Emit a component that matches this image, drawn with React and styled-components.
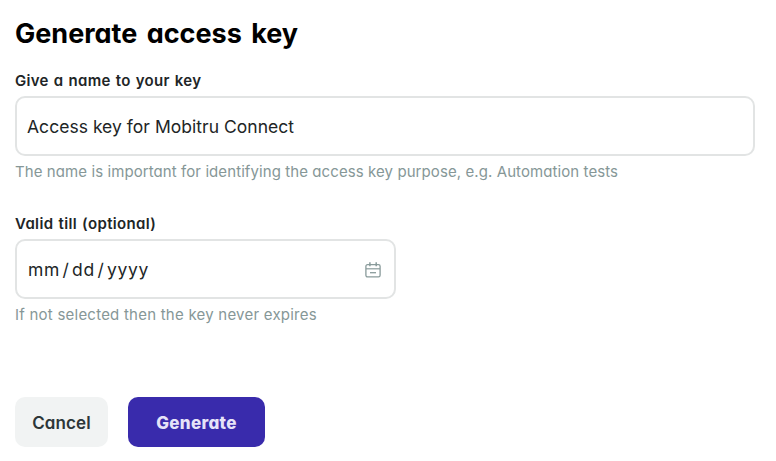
import React from "react"
import styled, { createGlobalStyle } from "styled-components"

const GlobalStyle = createGlobalStyle`
  * {
    box-sizing: border-box;
  }
  body {
    margin: 0;
    background-color: #fff;
    font-family: Inter, "Open Sans", sans-serif;
    font-feature-settings: "cv11";
  }
`

const Form = styled.form`
  display: flex;
  flex-direction: column;
  width: 776px;
  height: 461px;
  padding: 16px 21px 0 15px;
  h1 {
    margin: 0 0 20px;
    font-size: 27px;
    line-height: 36px;
    font-weight: 700;
    letter-spacing: 0;
    word-spacing: 3px;
    color: #000;
    white-space: nowrap;
  }
`

const Field = styled.div`
  display: flex;
  flex-direction: column;
  width: ${props => props.$width};
  height: 143px;
  white-space: nowrap;
`

const Label = styled.label`
  height: 24px;
  line-height: 18px;
  font-size: 15px;
  font-weight: 600;
  letter-spacing: ${props => props.$spacing};
  word-spacing: 1px;
  color: #212526;
`

const InputBox = styled.div`
  display: flex;
  align-items: center;
  justify-content: space-between;
  height: 60px;
  padding: 0 13px 0 ${props => props.$indent};
  border: 2px solid #e2e4e4;
  border-radius: 10px;
  font-size: 17.5px;
  letter-spacing: ${props => props.$spacing};
  color: #212526;
  svg {
    margin-top: 1px;
  }
`

const DateParts = styled.div`
  display: flex;
  gap: 2.5px;
`

const Hint = styled.span`
  padding-top: 6px;
  font-size: 15px;
  line-height: 20px;
  letter-spacing: ${props => props.$spacing};
  color: #869797;
`

const Buttons = styled.div`
  display: flex;
  gap: 20px;
  margin-top: 39px;
`

const Button = styled.button`
  width: ${props => (props.$primary ? "137px" : "93px")};
  height: 50px;
  padding: 2px 0 0;
  border: none;
  border-radius: 10px;
  font-family: inherit;
  font-feature-settings: inherit;
  font-size: 17px;
  font-weight: ${props => (props.$primary ? 800 : 600)};
  letter-spacing: ${props => (props.$primary ? "0.3px" : "0.1px")};
  color: ${props => (props.$primary ? "#e6e3f8" : "#2d3638")};
  background-color: ${props => (props.$primary ? "#392bac" : "#f1f3f3")};
`

const CalendarIcon = () => (
  <svg width="16" height="16" viewBox="0 0 16 16" fill="none" stroke="#899b9b">
    <rect x="0.9" y="2.7" width="14.2" height="12.2" rx="1.6" strokeWidth="1.3" />
    <path d="M1 6.8h14" strokeWidth="1.2" />
    <path d="M4.9 0.3v4M11.2 0.3v4" strokeWidth="1.5" />
    <path d="M5 10.7h6" strokeWidth="1.3" />
  </svg>
)

const App = () => (
  <>
    <GlobalStyle />
    <Form>
      <h1>Generate access key</h1>
      <Field $width="740px">
        <Label $spacing="0.3px">Give a name to your key</Label>
        <InputBox $indent="10px" $spacing="0.03px">
          Access key for Mobitru Connect
        </InputBox>
        <Hint $spacing="0.085px">
          The name is important for identifying the access key purpose, e.g. Automation tests
        </Hint>
      </Field>
      <Field $width="381px">
        <Label $spacing="0.35px">Valid till (optional)</Label>
        <InputBox $indent="11px" $spacing="0.7px">
          <DateParts>
            <span>mm</span>
            <span>/</span>
            <span>dd</span>
            <span>/</span>
            <span>yyyy</span>
          </DateParts>
          <CalendarIcon />
        </InputBox>
        <Hint $spacing="0.23px">If not selected then the key never expires</Hint>
      </Field>
      <Buttons>
        <Button type="button">Cancel</Button>
        <Button type="button" $primary>
          Generate
        </Button>
      </Buttons>
    </Form>
  </>
)

export default App
